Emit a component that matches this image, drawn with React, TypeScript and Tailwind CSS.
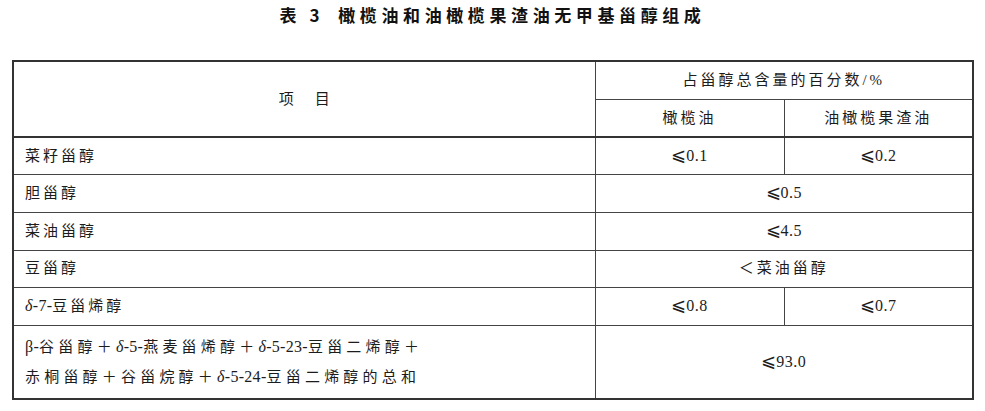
import React from 'react';

const cjk = '"Liberation Serif", "Noto Sans CJK SC", serif';

const Le = ({ v }: { v: string }) => (
  <span className="tracking-normal">
    <span className="font-['DejaVu_Serif'] text-[18px] leading-none">⩽</span>
    <span className="font-['Liberation_Serif'] text-[16px] tracking-[0.5px]">{v}</span>
  </span>
);

// latin run inside spaced CJK text
const L = ({ children }: { children: React.ReactNode }) => (
  <span className="font-['Liberation_Serif'] text-[16px] tracking-[0.3px]">{children}</span>
);

const D = () => <i className="font-['Liberation_Serif'] text-[16px] tracking-[0.3px]">δ</i>;

const rows: { name: React.ReactNode; a: React.ReactNode; b?: React.ReactNode; h: string }[] = [
  { name: '菜籽甾醇', a: <Le v="0.1" />, b: <Le v="0.2" />, h: 'h-[37px]' },
  { name: '胆甾醇', a: <Le v="0.5" />, h: 'h-[38px]' },
  { name: '菜油甾醇', a: <Le v="4.5" />, h: 'h-[38px]' },
  { name: '豆甾醇', a: <span className="tracking-[3px]">＜菜油甾醇</span>, h: 'h-[37px]' },
  {
    name: (
      <>
        <D />
        <L>-7-</L>豆甾烯醇
      </>
    ),
    a: <Le v="0.8" />,
    b: <Le v="0.7" />,
    h: 'h-[38px]',
  },
];

export default function App() {
  return (
    <div className="w-[985px] h-[411px] bg-white text-[#1c1c1c]" style={{ fontFamily: cjk }}>
      <div className="h-[30px] flex items-center justify-center font-['Noto_Sans_CJK_SC'] font-bold text-[17px] text-[#111] tracking-[4.6px]">
        <span>表 3</span>
        <span className="ml-[14px]">橄榄油和油橄榄果渣油无甲基甾醇组成</span>
      </div>
      <table className="mt-[30px] ml-[12px] w-[960px] border-collapse border-2 border-[#333] text-[15px] table-fixed">
        <colgroup>
          <col className="w-[582px]" />
          <col className="w-[189px]" />
          <col className="w-[189px]" />
        </colgroup>
        <thead>
          <tr className="h-[38px]">
            <th rowSpan={2} className="border border-[#444] border-b-2 border-b-[#333] font-normal text-center">
              <span className="tracking-[3px]">项</span>
              <span className="ml-[18px]">目</span>
            </th>
            <th colSpan={2} className="border border-[#444] font-normal text-center tracking-[3px]">
              占甾醇总含量的百分数/%
            </th>
          </tr>
          <tr className="h-[38px]">
            <th className="border border-[#444] border-b-2 border-b-[#333] font-normal text-center tracking-[3px]">橄榄油</th>
            <th className="border border-[#444] border-b-2 border-b-[#333] font-normal text-center tracking-[3px]">油橄榄果渣油</th>
          </tr>
        </thead>
        <tbody>
          {rows.map((r, i) => (
            <tr key={i} className={r.h}>
              <td className="border border-[#444] pl-[11px] tracking-[3px]">{r.name}</td>
              {r.b ? (
                <>
                  <td className="border border-[#444] text-center">{r.a}</td>
                  <td className="border border-[#444] text-center">{r.b}</td>
                </>
              ) : (
                <td colSpan={2} className="border border-[#444] text-center">{r.a}</td>
              )}
            </tr>
          ))}
          <tr className="h-[74px]">
            <td className="border border-[#444] pl-[11px] tracking-[4.2px] leading-[30px]">
              <div>
                <L>β-</L>谷甾醇＋<D />
                <L>-5-</L>燕麦甾烯醇＋<D />
                <L>-5-23-</L>豆甾二烯醇＋
              </div>
              <div>
                赤桐甾醇＋谷甾烷醇＋<D />
                <L>-5-24-</L>豆甾二烯醇的总和
              </div>
            </td>
            <td colSpan={2} className="border border-[#444] text-center">
              <Le v="93.0" />
            </td>
          </tr>
        </tbody>
      </table>
    </div>
  );
}
